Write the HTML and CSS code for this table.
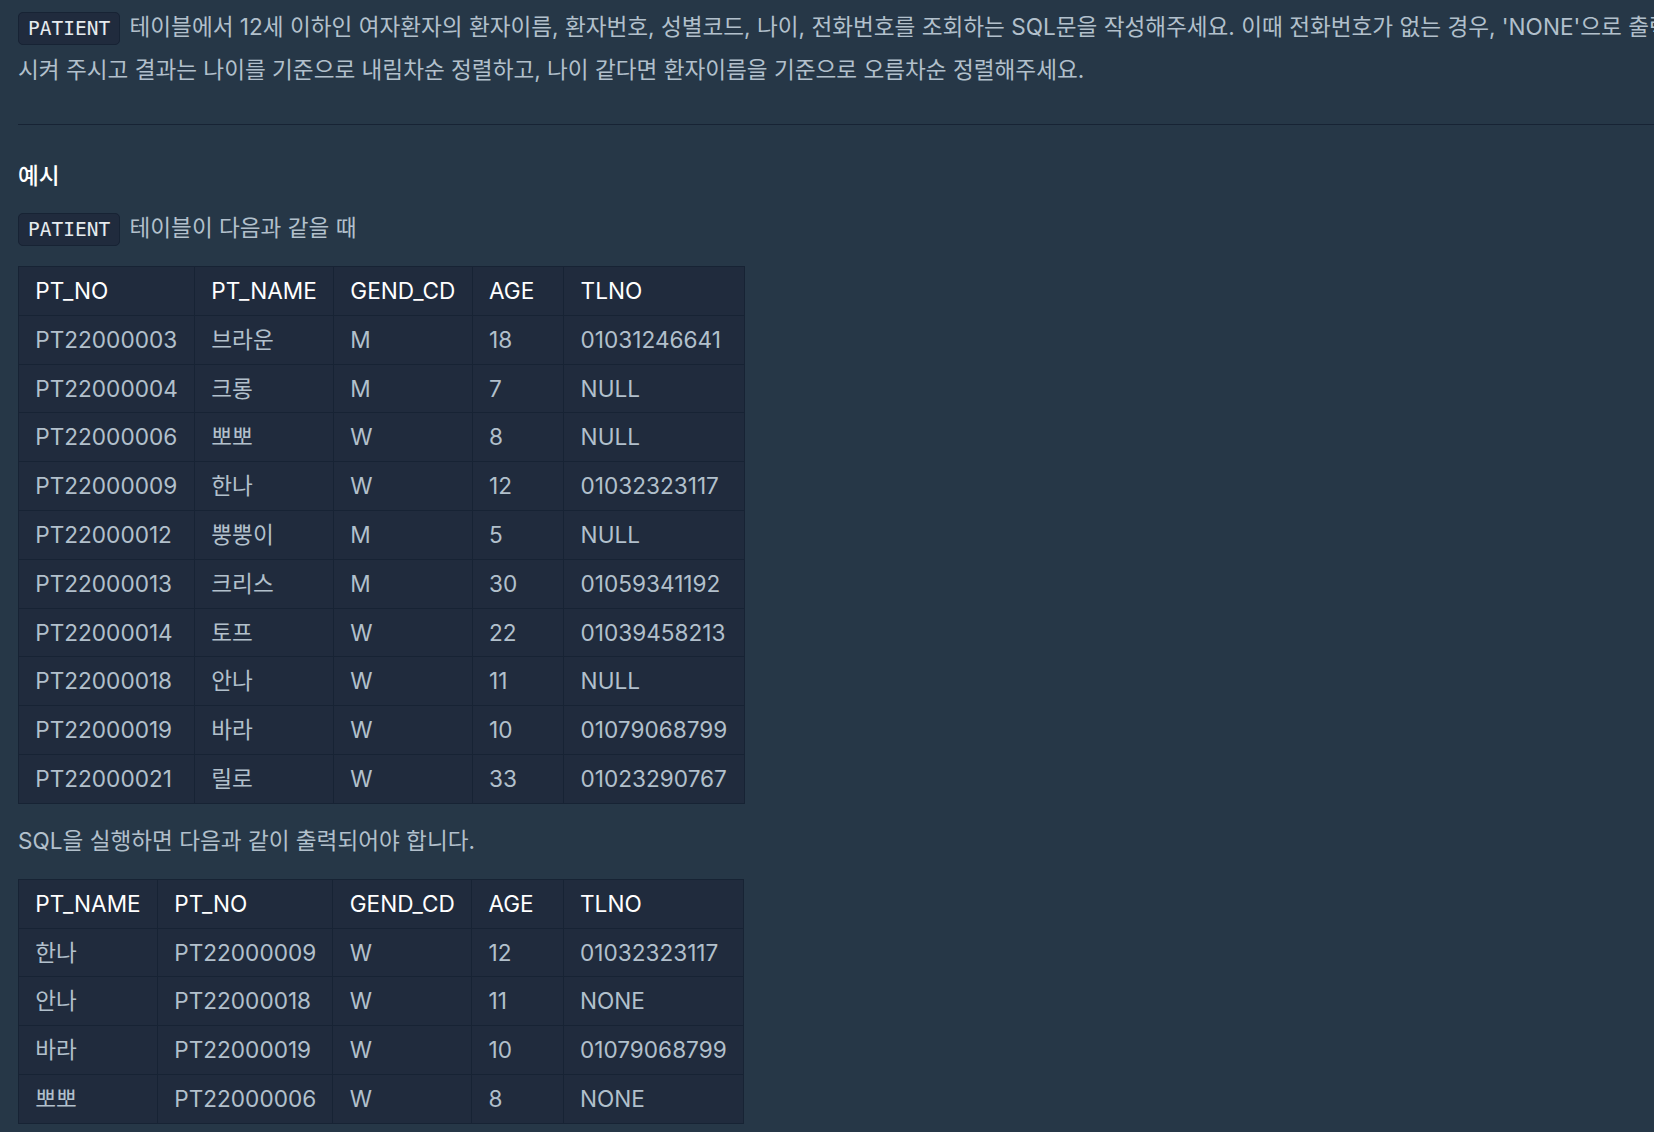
FILE: index.html
```html
<!DOCTYPE html>
<html lang="ko">
<head>
<meta charset="utf-8">
<title>문제 설명</title>
<link rel="stylesheet" href="styles.css">
</head>
<body>
<div class="content">
  <p class="desc"><code>PATIENT</code> 테이블에서 12세 이하인 여자환자의 환자이름, 환자번호, 성별코드, 나이, 전화번호를 조회하는 SQL문을 작성해주세요. 이때 전화번호가 없는 경우, 'NONE'으로 출력<br>시켜 주시고 결과는 나이를 기준으로 내림차순 정렬하고, 나이 같다면 환자이름을 기준으로 오름차순 정렬해주세요.</p>
  <hr class="rule">
  <h5 class="heading">예시</h5>
  <p class="text"><code>PATIENT</code> 테이블이 다음과 같을 때</p>
  <table class="grid">
    <thead>
      <tr><th>PT_NO</th><th>PT_NAME</th><th>GEND_CD</th><th class="age">AGE</th><th>TLNO</th></tr>
    </thead>
    <tbody>
      <tr><td>PT22000003</td><td>브라운</td><td>M</td><td>18</td><td>01031246641</td></tr>
      <tr><td>PT22000004</td><td>크롱</td><td>M</td><td>7</td><td>NULL</td></tr>
      <tr><td>PT22000006</td><td>뽀뽀</td><td>W</td><td>8</td><td>NULL</td></tr>
      <tr><td>PT22000009</td><td>한나</td><td>W</td><td>12</td><td>01032323117</td></tr>
      <tr><td>PT22000012</td><td>뿡뿡이</td><td>M</td><td>5</td><td>NULL</td></tr>
      <tr><td>PT22000013</td><td>크리스</td><td>M</td><td>30</td><td>01059341192</td></tr>
      <tr><td>PT22000014</td><td>토프</td><td>W</td><td>22</td><td>01039458213</td></tr>
      <tr><td>PT22000018</td><td>안나</td><td>W</td><td>11</td><td>NULL</td></tr>
      <tr><td>PT22000019</td><td>바라</td><td>W</td><td>10</td><td>01079068799</td></tr>
      <tr><td>PT22000021</td><td>릴로</td><td>W</td><td>33</td><td>01023290767</td></tr>
    </tbody>
  </table>
  <p class="text text-result">SQL을 실행하면 다음과 같이 출력되어야 합니다.</p>
  <table class="grid">
    <thead>
      <tr><th>PT_NAME</th><th>PT_NO</th><th>GEND_CD</th><th class="age">AGE</th><th>TLNO</th></tr>
    </thead>
    <tbody>
      <tr><td>한나</td><td>PT22000009</td><td>W</td><td>12</td><td>01032323117</td></tr>
      <tr><td>안나</td><td>PT22000018</td><td>W</td><td>11</td><td>NONE</td></tr>
      <tr><td>바라</td><td>PT22000019</td><td>W</td><td>10</td><td>01079068799</td></tr>
      <tr><td>뽀뽀</td><td>PT22000006</td><td>W</td><td>8</td><td>NONE</td></tr>
    </tbody>
  </table>
</div>
</body>
</html>
```

FILE: styles.css
```css
html, body {
  margin: 0;
  padding: 0;
  background: #263747;
  overflow: hidden;
}

body {
  width: 1654px;
  height: 1132px;
  font-family: Inter, "Noto Sans CJK KR", sans-serif;
  font-size: 22.6px;
  color: #b2c0cc;
}

.content {
  padding: 6px 0 0 18px;
  white-space: nowrap;
}

.desc,
.text {
  margin: 0;
  line-height: 41px;
}

.text {
  margin: 0 0 16px;
}

.text-result {
  margin-bottom: 18px;
}

code {
  font-family: "DejaVu Sans Mono", monospace;
  font-size: 19.5px;
  color: #e6ebef;
  background: #202b3d;
  border: 1px solid #172334;
  border-radius: 5px;
  padding: 4px 9px 4px 9px;
  margin-right: 3px;
}

.rule {
  margin: 34px 0 0;
  border: 0;
  border-top: 1px solid #172334;
  height: 0;
}

.heading {
  margin: 30px 0 11px;
  font-size: 22.6px;
  font-weight: 500;
  line-height: 41px;
  color: #ffffff;
}

.grid {
  border-collapse: collapse;
  background: #202b3d;
  margin: 0 0 16px;
}

.grid th,
.grid td {
  border: 1px solid #172334;
  padding: 11px 16.3px;
  line-height: 25.8px;
  text-align: left;
  font-weight: 400;
}

.grid th {
  color: #ffffff;
}

.grid th.age {
  width: 58px;
}
```
